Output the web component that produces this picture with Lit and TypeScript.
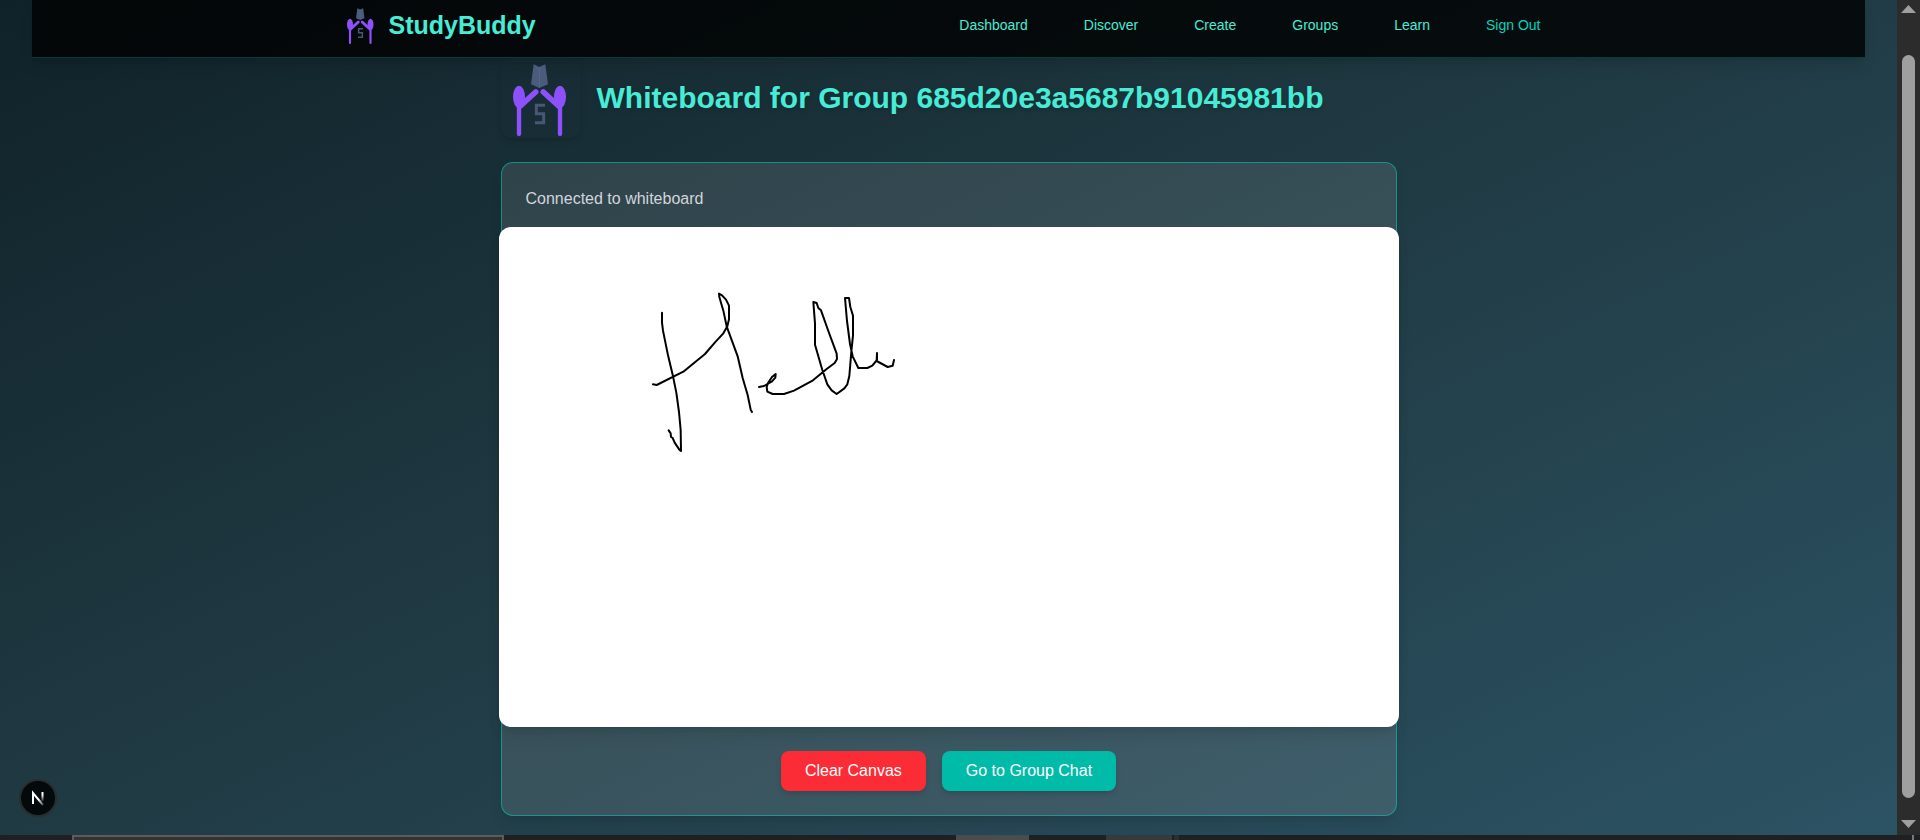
import { LitElement, html, css } from "lit";
import { customElement } from "lit/decorators.js";

@customElement("study-logo")
class StudyLogo extends LitElement {
  static styles = css`
    :host { display: block; flex: none; }
    svg { display: block; width: 100%; height: 100%; }
  `;
  render() {
    return html`
      <svg viewBox="0 0 240 240" role="img" aria-label="StudyBuddy logo">
        <path d="M98 19 L115 27 L133 19 L141 79 L115 90 L90 79 Z" fill="#4a5b7c" />
        <path d="M115 27 V90" stroke="#5c6d8e" stroke-width="2" />
        <g fill="#8d51fc">
          <ellipse cx="54" cy="117" rx="18" ry="34" />
          <ellipse cx="177" cy="117" rx="18" ry="34" />
        </g>
        <g fill="none" stroke="#8d51fc" stroke-linecap="round">
          <path d="M54 130 V228 M177 130 V228" stroke-width="13" />
          <path d="M58 144 L104 102 M173 144 L127 102" stroke-width="17" />
        </g>
        <path d="M132 142 H106 V167 H128 V194 H102" fill="none" stroke="#465777" stroke-width="9" />
      </svg>
    `;
  }
}

@customElement("app-root")
class AppRoot extends LitElement {
  static styles = css`
    :host {
      display: flex;
      flex-direction: column;
      height: 100vh;
      overflow: hidden;
      font-family: "Liberation Sans", Arial, sans-serif;
      font-size: 16px;
      line-height: 24px;
    }
    * { box-sizing: border-box; }
    .window { flex: 1; min-height: 0; display: flex; }
    .page {
      flex: 1;
      min-width: 0;
      position: relative;
      padding: 0 32px;
      background: linear-gradient(to bottom right, #0f2027, #203a43, #2c5364) 0 100% / 100% 108%;
    }
    .header {
      height: 58px;
      background: rgba(0, 0, 0, 0.8);
      border-bottom: 1px solid rgba(0, 187, 167, 0.3);
      box-shadow: 0 10px 15px -3px rgba(0, 0, 0, 0.1), 0 4px 6px -4px rgba(0, 0, 0, 0.1);
    }
    .bar {
      display: flex;
      justify-content: space-between;
      align-items: center;
      max-width: 1280px;
      height: 50px;
      margin: 0 auto;
      padding: 0 32px;
    }
    .brand {
      display: flex;
      align-items: center;
      gap: 8px;
      color: #46ecd5;
      font-size: 25px;
      font-weight: 700;
      text-decoration: none;
    }
    .brand-logo { width: 40px; height: 40px; }
    .links { display: flex; gap: 24px; }
    .link {
      padding: 0 16px;
      color: #46ecd5;
      font: inherit;
      font-size: 14px;
      text-decoration: none;
      background: none;
      border: 0;
    }
    .sign-out { color: #00d5be; }
    .main { max-width: 896px; margin: 0 auto; }
    .heading { display: flex; align-items: center; gap: 16px; }
    .heading-logo {
      width: 80px;
      height: 80px;
      border-radius: 12px;
      box-shadow: 0 4px 6px -1px rgba(0, 0, 0, 0.1), 0 2px 4px -2px rgba(0, 0, 0, 0.1);
    }
    .title {
      margin: 0;
      color: #46ecd5;
      font-size: 30px;
      line-height: 36px;
      font-weight: 700;
      text-shadow: 0 2px 4px rgba(0, 0, 0, 0.15);
    }
    .card {
      display: flex;
      flex-direction: column;
      align-items: center;
      margin-top: 24px;
      padding: 24px;
      background: rgba(255, 255, 255, 0.1);
      border: 1px solid rgba(0, 213, 190, 0.5);
      border-radius: 12px;
      box-shadow: 0 10px 15px -3px rgba(0, 0, 0, 0.1), 0 4px 6px -4px rgba(0, 0, 0, 0.1);
    }
    .status { align-self: stretch; margin: 0 0 16px; color: #d1d5dc; }
    .board {
      display: block;
      flex: none;
      width: 900px;
      height: 500px;
      background: #fff;
      border-radius: 12px;
      box-shadow: 0 10px 15px -3px rgba(0, 0, 0, 0.1), 0 4px 6px -4px rgba(0, 0, 0, 0.1);
    }
    .actions { display: flex; gap: 16px; margin-top: 24px; }
    .button {
      padding: 8px 24px;
      border: 0;
      border-radius: 8px;
      color: #fff;
      font: inherit;
      box-shadow: 0 4px 6px -1px rgba(0, 0, 0, 0.1), 0 2px 4px -2px rgba(0, 0, 0, 0.1);
    }
    .clear { background: #fb2c36; }
    .chat { background: #00bba7; }
    .dev {
      position: absolute;
      left: 19px;
      bottom: 18px;
      width: 38px;
      height: 38px;
      padding: 0;
      border: 2px solid #2a2d2e;
      border-radius: 50%;
      background: #04090b;
    }
    .dev svg { display: block; width: 34px; height: 34px; }
    .scrollbar {
      flex: none;
      display: flex;
      flex-direction: column;
      align-items: center;
      width: 23px;
      padding: 5px 0 7px;
      background: #2c2c2c;
    }
    .arrow { display: block; width: 15px; height: 8px; fill: #9f9f9f; }
    .thumb { flex: 1; width: 13px; margin: 42px 0 22px; border-radius: 7px; background: #9f9f9f; }
    .strip { flex: none; display: flex; height: 5px; background: #1e2022; }
    .tab { width: 432px; margin-left: 72px; border: 2px solid #5c5c5c; border-bottom: 0; background: #333; }
    .task { width: 73px; margin-left: 452px; background: #4b4c4f; }
    .task-dim { width: 66px; margin-left: 77px; background: #37393b; }
    .task-edge { width: 5px; margin-left: 2px; background: #2c2e30; }
    .task-end { width: 2px; margin: 0 6px 0 auto; background: #77797b; }
  `;

  render() {
    const links = ["Dashboard", "Discover", "Create", "Groups", "Learn"];
    return html`
      <div class="window">
        <div class="page">
          <header class="header">
            <div class="bar">
              <a class="brand" href="#home"><study-logo class="brand-logo"></study-logo>StudyBuddy</a>
              <nav class="links">
                ${links.map((name) => html`<a class="link" href="#${name.toLowerCase()}">${name}</a>`)}
                <button class="link sign-out" type="button">Sign Out</button>
              </nav>
            </div>
          </header>
          <main class="main">
            <div class="heading">
              <study-logo class="heading-logo"></study-logo>
              <h1 class="title">Whiteboard for Group 685d20e3a5687b91045981bb</h1>
            </div>
            <section class="card">
              <p class="status">Connected to whiteboard</p>
              <svg class="board" viewBox="0 0 900 500" role="img" aria-label="Whiteboard drawing">
                <g transform="translate(141 53) scale(0.33333)" fill="none" stroke="#000" stroke-width="6"
                  stroke-linecap="round" stroke-linejoin="round">
                  <path d="M66 98 V128 L69 152 L84 226 L98 284 L109 338 L117 396 L122 450 L123 513 L118 509 L104 488 L98 474 L93 471 L92 460 L86 451" />
                  <path d="M39 313 L50 315 L130 275 L195 222 L225 187 L250 160 L262 139 L267 118 V77 L258 59 L246 46 L237 41 L238 51 L250 92 L260 139 L293 229 L308 294 L323 345 L332 389 L336 396" />
                  <path d="M357 321 L372 318 L396 304 L406 293 L407 282 L396 291 L384 309 L380 321 L382 335 L398 342 H432 L462 332 L519 301 L560 267 L584 249 L591 237 L590 221 L565 153 L543 91 L535 84 L530 69 L520 66 L525 130 V194 L547 270 L562 313 L575 331 L590 342 L613 325 L622 313 L628 288 L634 215 L639 166 V107 L631 81 L627 54 L615 54 L621 123 L630 192 L638 229 L655 264 H682 L697 257 L711 240 V219 L710 243 L743 261 L758 257 L762 240" />
                </g>
              </svg>
              <div class="actions">
                <button class="button clear" type="button">Clear Canvas</button>
                <button class="button chat" type="button">Go to Group Chat</button>
              </div>
            </section>
          </main>
          <button class="dev" type="button" aria-label="Open developer tools">
            <svg viewBox="0 0 34 34" fill="none" stroke-width="2">
              <defs>
                <linearGradient id="stem" x1="0" y1="11" x2="0" y2="21" gradientUnits="userSpaceOnUse">
                  <stop offset="0.3" stop-color="#fff" /><stop offset="1" stop-color="#fff" stop-opacity="0" />
                </linearGradient>
                <linearGradient id="slash" x1="18" y1="18" x2="23" y2="24" gradientUnits="userSpaceOnUse">
                  <stop offset="0" stop-color="#fff" /><stop offset="1" stop-color="#fff" stop-opacity="0.2" />
                </linearGradient>
              </defs>
              <path d="M12 23 V12 L22 24" stroke="url(#slash)" />
              <path d="M21.500 11 V20" stroke="url(#stem)" />
            </svg>
          </button>
        </div>
        <div class="scrollbar" aria-hidden="true">
          <svg class="arrow" viewBox="0 0 15 8"><path d="M7.500 0 L15 8 H0 Z" /></svg>
          <div class="thumb"></div>
          <svg class="arrow" viewBox="0 0 15 8"><path d="M0 0 H15 L7.500 8 Z" /></svg>
        </div>
      </div>
      <div class="strip" aria-hidden="true">
        <div class="tab"></div>
        <div class="task"></div>
        <div class="task-dim"></div>
        <div class="task-edge"></div>
        <div class="task-end"></div>
      </div>
    `;
  }
}
